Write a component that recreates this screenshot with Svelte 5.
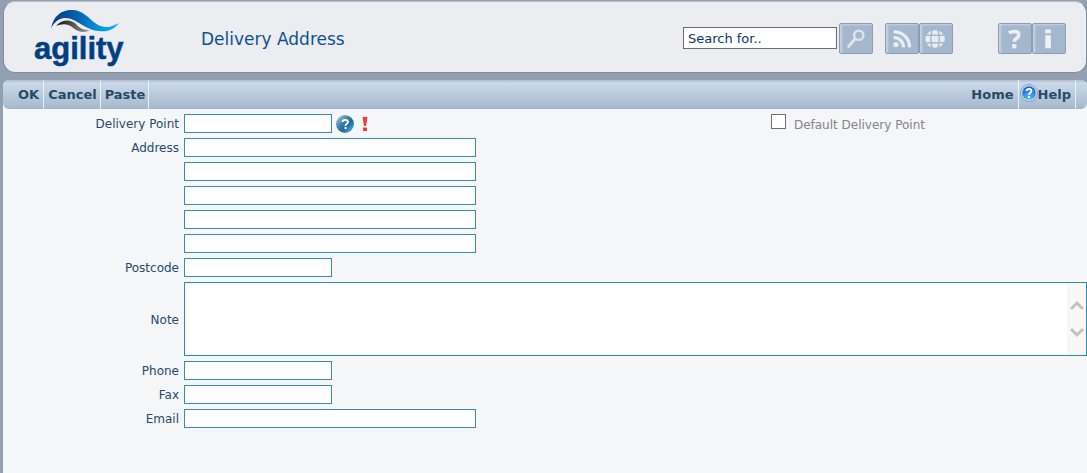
<script>
  const addressLines = [1, 2, 3, 4, 5];
  let search = $state('Search for..');
</script>

<div class="page">
  <header class="banner">
    <svg class="logo" viewBox="0 0 96 64" role="img" aria-label="agility">
      <defs>
        <linearGradient id="wave">
          <stop offset="0" stop-color="#003f86" />
          <stop offset="0.3" stop-color="#0a55a0" />
          <stop offset="0.75" stop-color="#009be4" />
          <stop offset="1" stop-color="#14b4f0" />
        </linearGradient>
        <linearGradient id="shade">
          <stop offset="0" stop-color="#111" />
          <stop offset="1" stop-color="#999" />
        </linearGradient>
      </defs>
      <path fill="url(#wave)" d="M19 23C21 9 31 3 41 4C56 5 61 21 74 21C79 21 83 19 87 17C82 24 75 26 67 25C52 24 44 11 32 12C26 13 21 17 19 23Z" />
      <path fill="url(#shade)" d="M24 20C30 13 39 13 44 18C48 23 52 24 58 24C51 28 45 25 40 21C35 17 29 18 24 20Z" />
      <text x="2" y="53">agility</text>
    </svg>
    <h1>Delivery Address</h1>
    <form class="search" onsubmit={(e) => e.preventDefault()}>
      <input type="text" aria-label="Search" bind:value={search} />
      <button class="tile" aria-label="Search">
        <svg viewBox="0 0 34 31"><circle cx="20" cy="12" r="5" fill="none" stroke="#dfe5ed" stroke-width="2.5" /><path d="M16 16L9 24" stroke="#dfe5ed" stroke-width="3" stroke-linecap="round" /></svg>
      </button>
    </form>
    <div class="pair links">
      <button class="tile" aria-label="News feed">
        <svg viewBox="0 0 34 31" fill="none" stroke="#e8edf3" stroke-width="3.5"><circle cx="10.500" cy="22" r="2.800" fill="#e8edf3" stroke="none" /><path d="M8 14.500A10 10 0 0 1 18.500 25M8 8.500A16 16 0 0 1 25 25" /></svg>
      </button>
      <button class="tile" aria-label="Web">
        <svg viewBox="0 0 34 31"><ellipse cx="16" cy="16" rx="10.500" ry="9.500" fill="#e8edf3" /><path d="M5 12H28M5 20H28M13 6Q10 16 13 26M19 6Q22 16 19 26" fill="none" stroke="#a5b7cc" stroke-width="1.500" /></svg>
      </button>
    </div>
    <div class="pair">
      <button class="tile" aria-label="Help">
        <svg viewBox="0 0 34 31"><path d="M10.500 9.500Q13 8 16.500 8Q21 8 21 11.500Q21 14 18.500 15.500Q16 17 16 19" fill="none" stroke="#edf1f5" stroke-width="3.800" /><path d="M14 21.500H18.500V26H14Z" fill="#edf1f5" /></svg>
      </button>
      <button class="tile" aria-label="Information">
        <svg viewBox="0 0 34 31"><path d="M13 6H19V10H13ZM13 12H19V26H13Z" fill="#edf1f5" /></svg>
      </button>
    </div>
  </header>

  <main>
    <nav class="toolbar">
      <button>OK</button>
      <button>Cancel</button>
      <button>Paste</button>
      <a class="home" href="#home">Home</a>
      <a class="help" href="#help">
        <svg viewBox="0 0 18 18" aria-hidden="true">
          <defs><radialGradient id="ball" cy="0.9" r="0.8"><stop offset="0" stop-color="#4cc4ff" /><stop offset="1" stop-color="#2562d0" /></radialGradient></defs>
          <circle cx="9" cy="9" r="8.500" fill="#c9dcf2" stroke="#7fa0cc" />
          <circle cx="9" cy="9" r="6.800" fill="url(#ball)" />
          <path d="M6.500 7Q6.500 5 9 5Q11.500 5 11.500 7Q11.500 8 10 9Q9 9.500 9 11" fill="none" stroke="#fff" stroke-width="1.800" /><path d="M8 12H10V14H8Z" fill="#fff" />
        </svg>Help</a>
    </nav>

    <form class="fields" onsubmit={(e) => e.preventDefault()}>
      <label for="point">Delivery Point</label>
      <div class="line">
        <input id="point" class="short" type="text" required />
        <button class="lookup" type="button" aria-label="Delivery point help">
          <svg viewBox="0 0 18 18">
            <defs><linearGradient id="orb" x2="1" y2="1"><stop offset="0" stop-color="#c4d6e2" /><stop offset="0.4" stop-color="#3f82ab" /><stop offset="0.6" stop-color="#1c6c9e" /><stop offset="1" stop-color="#62c6ea" /></linearGradient></defs>
            <circle cx="9" cy="9" r="9" fill="url(#orb)" />
            <path d="M6.500 7Q6.500 5 9 5Q12 5 12 7Q12 8 10.500 9Q9.500 9.500 9.500 11" fill="none" stroke="#fff" stroke-width="1.800" /><path d="M8.500 12H10.500V14H8.500Z" fill="#fff" />
          </svg>
        </button>
        <svg class="alert" viewBox="0 0 6 14" aria-hidden="true"><path d="M0.500 0H5.500L4 9H2ZM1 10.500H5V14H1Z" fill="#f03a3a" /></svg>
        <label class="default"><input type="checkbox" /><span>Default Delivery Point</span></label>
      </div>

      {#each addressLines as n}
        {#if n === 1}
          <label for="address1">Address</label>
        {/if}
        <input id="address{n}" class="long" type="text" aria-label="Address line {n}" />
      {/each}

      <label for="postcode">Postcode</label>
      <input id="postcode" class="short" type="text" />

      <label for="note">Note</label>
      <div class="note">
        <textarea id="note"></textarea>
        <div class="scroll" aria-hidden="true">
          <svg viewBox="0 0 14 38" fill="none" stroke="#c1c1c1" stroke-width="3"><path d="M1 9L7 3L13 9M1 29L7 35L13 29" /></svg>
        </div>
      </div>

      <label for="phone">Phone</label>
      <input id="phone" class="short" type="text" />
      <label for="fax">Fax</label>
      <input id="fax" class="short" type="text" />
      <label for="email">Email</label>
      <input id="email" class="long" type="email" />
    </form>
  </main>
</div>

<style>
  :global(body) {
    margin: 0;
    background: #92a0b1;
  }
  .page, input, button, textarea {
    box-sizing: border-box;
    font-family: "DejaVu Sans", Verdana, sans-serif;
    font-size: 12px;
  }
  .page {
    display: flex;
    flex-direction: column;
    gap: 7px;
    min-height: 100vh;
    padding: 1px 0 0 3px;
    color: #264a6b;
  }
  button {
    margin: 0;
    padding: 0;
    border: 0;
    background: none;
    color: inherit;
  }
  svg {
    display: block;
  }
  .banner {
    display: flex;
    align-items: center;
    box-sizing: border-box;
    height: 72px;
    padding: 2px 20px 0 28px;
    border: 1px solid #7f8c9a;
    border-top-color: #b6bfca;
    border-radius: 12px;
    background: #ecedf1;
  }
  .logo {
    width: 96px;
    height: 64px;
  }
  .logo text {
    font-family: "Liberation Sans", Arial, sans-serif;
    font-size: 31px;
    font-weight: bold;
    fill: #003f83;
    stroke: #003f83;
    stroke-width: 0.5px;
  }
  h1 {
    margin: 0 auto 0 73px;
    padding-top: 2px;
    font-size: 17px;
    font-weight: normal;
    line-height: 24px;
    color: #10508f;
  }
  .search {
    display: flex;
    align-items: center;
    gap: 2px;
    margin-right: 12px;
  }
  .search input {
    width: 154px;
    height: 22px;
    padding: 1px 4px 0;
    border: 1px solid #6c6c6c;
    background: #fff;
    color: #0b3569;
    font-size: 13px;
  }
  .tile {
    width: 34px;
    height: 31px;
    border: 1px solid #8b9db1;
    border-radius: 2px;
    background: #a5b7cc;
    box-shadow: inset 2px 1px 2px #c8d3df;
  }
  .tile svg {
    width: 100%;
    height: 100%;
  }
  .pair {
    display: flex;
  }
  .links {
    margin-right: 45px;
  }
  main {
    flex: 1;
    background: #f5f6f8;
    border-radius: 6px 6px 0 0;
  }
  .toolbar {
    display: flex;
    height: 29px;
    padding: 0 11px;
    border-radius: 6px;
    background: linear-gradient(#aebdce, #cbd9e8 3px, #a7b9cd 28px, #98aac0);
  }
  .toolbar button, .toolbar a {
    display: flex;
    align-items: center;
    padding: 0 4px;
    border-right: 1px solid #e1f5f8;
    font-size: 13px;
    font-weight: bold;
    color: #264a68;
    text-decoration: none;
  }
  .toolbar button + button {
    padding: 0 3px 0 4px;
  }
  .toolbar .home {
    margin-left: auto;
  }
  .toolbar .help {
    padding-left: 1px;
  }
  .help svg {
    width: 18px;
    height: 18px;
    margin-bottom: 4px;
  }
  .fields {
    display: grid;
    grid-template-columns: 176px minmax(0, 1fr);
    column-gap: 5px;
    row-gap: 5px;
    align-items: center;
    padding-top: 5px;
  }
  .fields > label {
    grid-column: 1;
    padding-top: 2px;
    text-align: right;
    line-height: 17px;
  }
  .fields > input, .line, .note {
    grid-column: 2;
  }
  .fields input:not([type="checkbox"]) {
    height: 19px;
    padding: 0 3px;
    border: 1px solid #3b8bad;
    background: #fff;
  }
  .fields .short {
    width: 148px;
  }
  .fields .long {
    width: 292px;
  }
  .line {
    display: flex;
    align-items: center;
    height: 19px;
  }
  .lookup {
    margin-left: 4px;
  }
  .lookup svg {
    width: 18px;
    height: 18px;
  }
  .alert {
    width: 6px;
    height: 14px;
    margin-left: 8px;
  }
  .default {
    display: flex;
    align-items: center;
    gap: 8px;
    margin: 0 162px 0 auto;
    color: #848484;
  }
  .default span {
    padding-top: 2px;
  }
  .default input {
    appearance: none;
    width: 15px;
    height: 15px;
    margin: 0 0 4px;
    border: 1px solid #6e6e6e;
    background: #fff;
  }
  .note {
    display: flex;
    height: 74px;
    box-sizing: border-box;
    border: 1px solid #2b8bb0;
    background: #fff;
  }
  textarea {
    flex: 1;
    border: 0;
    outline: 0;
    resize: none;
    background: none;
  }
  .scroll {
    display: flex;
    align-items: center;
    justify-content: center;
    width: 19px;
    background: #f7f7f8;
  }
  .scroll svg {
    width: 14px;
    height: 38px;
  }
</style>
